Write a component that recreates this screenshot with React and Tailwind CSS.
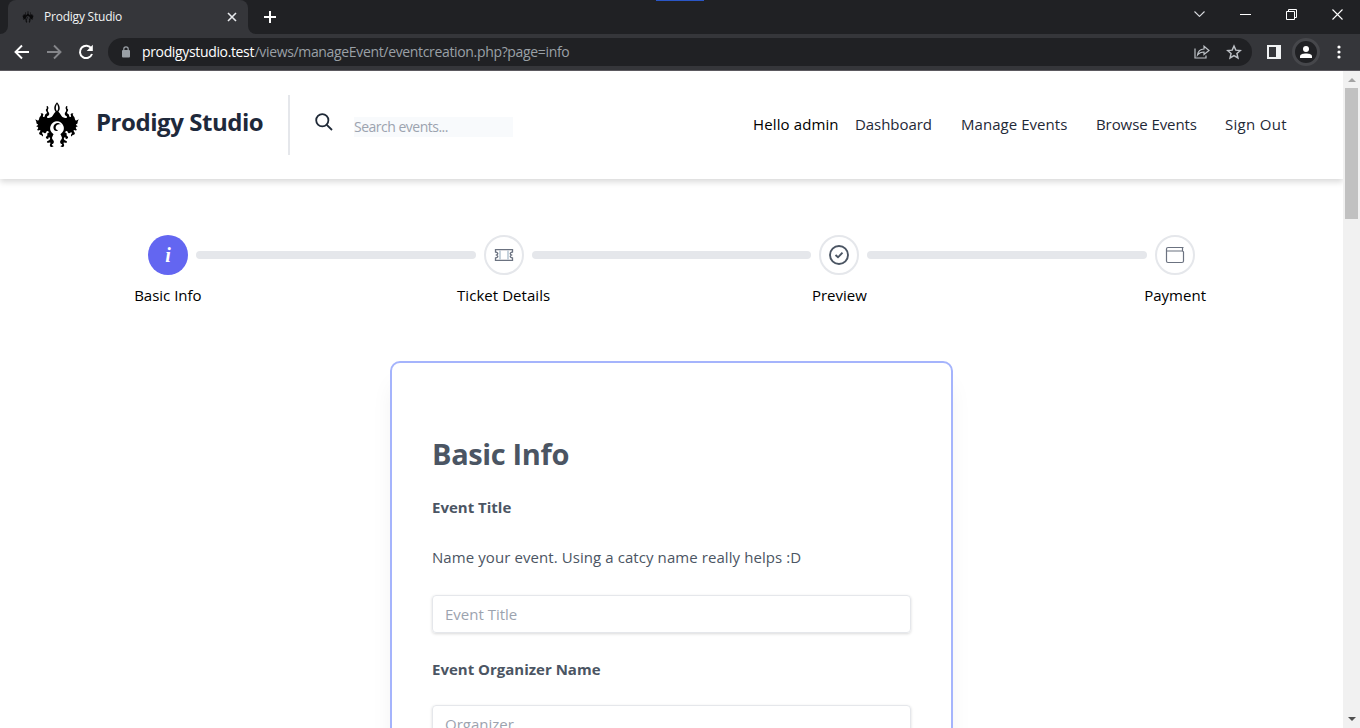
import React from "react";

function LogoHalf() {
  return (
    <g>
      <path d="M0 -74 C5 -69 9 -62 8 -55 C7.500 -49 4 -46 0 -43 L0 -48 C3 -51 4 -56 3 -61 C2 -65 1 -67 0 -69 Z" />
      <path d="M0 -49 C5 -46 8 -42 11 -37 C14 -32 17 -28 24 -28 C28 -27 31 -29 29 -33 C26 -34 22 -36 23 -41 C24 -46 28 -46 27 -51 C27 -54 24 -56 26 -60 C27 -63 30 -64 31 -61 C30 -58 29 -57 31 -55 C35 -52 32 -48 30 -45 C28 -42 33 -41 35 -38 C37 -35 34 -33 38 -31 C42 -29 43 -34 40 -37 C41 -42 46 -43 49 -40 C46 -39 46 -36 49 -33 C53 -30 52 -26 54 -22 C57 -19 60 -21 64 -24 C63 -19 60 -17 61 -13 C61 -10 56 -10 56 -8 C57 -5 61 -5 62 -3 C58 -2 54 -1 56 3 C58 6 61 7 56 9 C52 8 49 6 49 10 C50 14 55 16 52 20 C49 23 45 21 43 27 C40 25 41 21 44 18 C44 14 41 13 39 16 C36 19 32 16 31 12 C27 9 25 12 23 16 C20 20 16 18 13 23 L10 20 C20 13 22 4 19 -4 C16 -13 8 -18 0 -18 Z" />
      <path d="M11 21 C16 18 20 14 26 16 C31 18 27 22 29 25 C33 28 35 31 30 34 C26 35 24 32 25 29 C20 28 19 33 22 37 C25 40 32 40 29 45 C26 47 22 43 20 45 C18 49 22 50 21 54 C20 59 14 59 10 56 C12 53 16 54 15 50 C10 48 7 43 11 38 C15 34 16 30 13 26 Z" />
    </g>
  );
}

function Logo({ className }) {
  return (
    <svg viewBox="-65 -75 130 136" className={className} fill="currentColor">
      <LogoHalf />
      <g transform="scale(-1,1)"><LogoHalf /></g>
      <path d="M11 -8 C3 -11 -4 -6 -4 1 C-4 6 0 9 4 7 C0 13 -8 11 -10 4 C-12 -4 -7 -12 1 -13 C6 -13 9 -11 11 -8 Z" />
    </svg>
  );
}

function TabStrip() {
  return (
    <div className="flex h-[34px] bg-[#202124]">
      <div className="flex h-full w-2 items-end bg-[#35363a]">
        <div className="h-full w-full rounded-br-lg bg-[#202124]" />
      </div>
      <div className="flex h-full w-60 items-center rounded-t-lg bg-[#35363a] pl-[14px] pr-[11px]">
        <Logo className="h-3 w-3 text-black opacity-80" />
        <span className="ml-[10px] w-[160px] whitespace-nowrap text-[12px] leading-4 tracking-[-0.220px] text-[#f1f3f4]">Prodigy Studio</span>
        <svg viewBox="0 0 10 10" className="ml-auto h-[10px] w-[10px]" stroke="#e8eaed" strokeWidth="1.6"><path d="M1 1L9 9M9 1L1 9" /></svg>
      </div>
      <div className="flex h-full w-2 items-end bg-[#35363a]">
        <div className="h-full w-full rounded-bl-lg bg-[#202124]" />
      </div>
      <svg viewBox="0 0 12 12" className="ml-2 mt-[11px] h-3 w-3" stroke="#fff" strokeWidth="2"><path d="M6 0V12M0 6H12" /></svg>
      <div className="ml-[380px] h-px w-12 bg-[#2a56c6]" />
      <div className="ml-auto mr-[17.500px] mt-[9px] flex h-[10px] items-center gap-[35px]">
        <svg viewBox="0 0 11 6" className="h-[6px] w-[11px]" fill="none" stroke="#dadce0" strokeWidth="1.1"><path d="M.5 .5L5.5 5.4L10.5 .5" /></svg>
        <div className="h-px w-[11px] bg-white" />
        <svg viewBox="0 0 11 11" className="h-[11px] w-[11px]" fill="none" stroke="#fff" strokeWidth="1"><path d="M.5 2.5h8v8h-8zM2.5 2.5v-2h8v8h-2" /></svg>
        <svg viewBox="0 0 11 11" className="h-[11px] w-[11px]" stroke="#fff" strokeWidth="1.1"><path d="M.5 .5L10.5 10.5M10.5 .5L.5 10.5" /></svg>
      </div>
    </div>
  );
}

function Toolbar() {
  return (
    <div className="flex h-[37px] items-center border-b border-[#5b595f] bg-[#35363a] pl-[14px]">
      <svg viewBox="0 0 16 16" className="h-4 w-4" fill="none" stroke="#fff" strokeWidth="1.9"><path d="M15 8H2M8 1.5L1.5 8L8 14.5" /></svg>
      <svg viewBox="0 0 16 16" className="ml-4 h-4 w-4" fill="none" stroke="#85868a" strokeWidth="1.9"><path d="M1 8H14M8 1.5L14.500 8L8 14.500" /></svg>
      <svg viewBox="0 0 16 16" className="ml-4 h-4 w-4" fill="none" stroke="#fff" strokeWidth="2"><path d="M13.400 4.500A6.200 6.200 0 1 0 14 10" /><path d="M14.800 .8V7H8.700Z" fill="#fff" stroke="none" /></svg>
      <div className="ml-[14px] flex h-7 w-[1144px] items-center rounded-full bg-[#202124] pl-[14px] pr-[10px]">
        <svg viewBox="0 0 8 12" className="h-3 w-2" fill="#9aa0a6"><rect x="0" y="4" width="8" height="7.500" rx="1" /><path d="M1.800 5V3a2.200 2.200 0 0 1 4.400 0v2" fill="none" stroke="#9aa0a6" strokeWidth="1.200" /></svg>
        <span className="ml-3 flex whitespace-nowrap text-[14px] leading-5">
          <span className="w-[112.500px] tracking-[-0.350px] text-white">prodigystudio.test</span>
          <span className="tracking-[-0.340px] text-[#9aa0a6]">/views/manageEvent/eventcreation.php?page=info</span>
        </span>
        <svg viewBox="0 0 16 14" className="ml-auto h-[14px] w-4" fill="none" stroke="#bdc1c6" strokeWidth="1.200"><path d="M1 3.500V13H12V10.500" /><path d="M3.500 10C4 6 6.500 4.200 10 4V1.200L15 5.500L10 9.500V7C7 7 5 8 3.500 10Z" /></svg>
        <svg viewBox="0 0 24 24" className="ml-4 h-4 w-4" fill="none" stroke="#bdc1c6" strokeWidth="2.200"><path d="M12 3l2.700 6.200 6.800.6-5.100 4.500 1.500 6.600L12 17.400l-5.900 3.500 1.500-6.600-5.100-4.500 6.800-.6z" /></svg>
      </div>
      <div className="ml-[15px] h-[14px] w-[14px] border-2 border-r-[5px] border-[#f1f3f4]" />
      <div className="ml-[11px] flex h-7 w-7 items-center justify-center rounded-full border-[3px] border-[#46474b] bg-[#202124]">
        <svg viewBox="0 0 12 12" className="h-3 w-3" fill="#fff"><circle cx="6" cy="3" r="3" /><path d="M0 12V10.500C0 8.300 3 7.500 6 7.500S12 8.300 12 10.500V12Z" /></svg>
      </div>
      <svg viewBox="0 0 4 14" className="ml-[16.500px] h-[14px] w-1" fill="#fff"><circle cx="2" cy="2" r="1.600" /><circle cx="2" cy="7" r="1.600" /><circle cx="2" cy="12" r="1.600" /></svg>
    </div>
  );
}

function Header() {
  return (
    <header className="flex h-[108px] shrink-0 items-start pl-[35px] shadow-[0_3px_6px_rgba(0,0,0,0.150)]">
      <Logo className="mt-[31px] h-[46px] w-[44px] text-black" />
      <span className="ml-[17px] mt-[31px] w-[170px] whitespace-nowrap text-[24px] font-bold leading-10 tracking-[-0.450px] text-[#1e293b]">Prodigy Studio</span>
      <div className="ml-[22px] mt-6 h-[60px] w-[2px] bg-[#e5e7eb]" />
      <svg viewBox="0 0 18 18" className="ml-[25px] mt-[42px] h-[18px] w-[18px]" fill="none" stroke="#1f2937" strokeWidth="1.800"><circle cx="7.300" cy="7.300" r="6.100" /><path d="M11.800 11.800L17 17" /></svg>
      <div className="ml-[21px] mt-[46px] flex h-5 w-[159px] items-center whitespace-nowrap bg-[#f8fafc] text-[14px] leading-5 tracking-[-0.500px] text-[#9ca3af]">Search events...</div>
      <nav className="ml-auto mr-[55px] mt-[41px] flex whitespace-nowrap text-[15px] leading-6 text-[#1f2937]">
        <span className="w-[102px] tracking-[0.120px] text-black">Hello admin</span>
        <span className="w-[106px] tracking-[-0.050px]">Dashboard</span>
        <span className="w-[135px] tracking-[0.050px]">Manage Events</span>
        <span className="w-[129px] tracking-[-0.080px]">Browse Events</span>
        <span className="w-[63px] tracking-[0.300px]">Sign Out</span>
      </nav>
    </header>
  );
}

function Bar() {
  return <div className="mx-2 h-2 flex-1 rounded-full bg-[#e5e7eb]" />;
}

function Circle({ children }) {
  return <div className="flex h-10 w-10 items-center justify-center rounded-full border-2 border-[#e5e7eb]">{children}</div>;
}

function Steps() {
  return (
    <section className="mt-14">
      <div className="mx-[148px] flex items-center">
        <div className="flex h-10 w-10 items-center justify-center rounded-full bg-[#6366f1] font-['Liberation_Serif',serif] text-[20px] font-bold italic text-white">i</div>
        <Bar />
        <Circle>
          <svg viewBox="0 0 20 14" className="h-[14px] w-5" fill="none" stroke="#6b7280" strokeWidth="1.300"><path d="M1.500 1.600H18.500V4C16 4.500 15.500 6 17.500 7C15.500 8 16 9.500 18.500 10V12.400H1.500V10C4 9.500 4.500 8 2.500 7C4.500 6 4 4.500 1.500 4Z" /><path d="M6 2.500V11.500M14 2.500V11.500" stroke="#a9bccb" /></svg>
        </Circle>
        <Bar />
        <Circle>
          <svg viewBox="0 0 20 20" className="h-5 w-5" fill="none" stroke="#4b5563" strokeWidth="1.900"><circle cx="10" cy="10" r="9" /><path d="M6.500 10L9 12.300L13.500 7.700" /></svg>
        </Circle>
        <Bar />
        <Circle>
          <svg viewBox="0 0 20 18" className="h-[18px] w-5" fill="none" stroke="#6b7280" strokeWidth="1.200"><path d="M18.500 1.500H3Q1.500 1.500 1.500 3V15Q1.500 16.500 3 16.500H17Q18.500 16.500 18.500 15V6Q18.500 5 17 5H2M17.500 1.500V5" /></svg>
        </Circle>
      </div>
      <div className="mt-2 grid grid-cols-4 whitespace-nowrap text-center text-[15px] leading-6 text-black">
        <span>Basic Info</span>
        <span className="tracking-[0.050px]">Ticket Details</span>
        <span>Preview</span>
        <span>Payment</span>
      </div>
    </section>
  );
}

function Field({ placeholder }) {
  return (
    <div className="flex h-[38px] items-center rounded-[4px] border border-[#e5e7eb] px-3 text-[15px] leading-6 text-[#9ca3af] shadow-[0_1px_3px_rgba(0,0,0,0.150)]">{placeholder}</div>
  );
}

function FormCard() {
  return (
    <section className="ml-[390px] mt-[54px] h-[600px] w-[563px] rounded-[10px] border-2 border-[#a5b4fc] px-10 pt-[71px] text-[#4b5563] shadow-[0_20px_25px_-5px_rgba(0,0,0,0.080)]">
      <h1 className="h-10 whitespace-nowrap text-[29px] font-bold leading-10 tracking-[-0.350px]">Basic Info</h1>
      <h2 className="mt-[21px] whitespace-nowrap text-[15px] font-bold leading-6">Event Title</h2>
      <p className="mt-[26px] whitespace-nowrap text-[15px] leading-6 tracking-[0.080px]">Name your event. Using a catcy name really helps :D</p>
      <div className="mt-[26px]"><Field placeholder="Event Title" /></div>
      <h2 className="mt-6 whitespace-nowrap text-[15px] font-bold leading-6">Event Organizer Name</h2>
      <div className="mt-6"><Field placeholder="Organizer" /></div>
    </section>
  );
}

function Scrollbar() {
  return (
    <div className="flex w-[17px] shrink-0 flex-col items-center bg-[#f1f1f1]">
      <svg viewBox="0 0 8 4" className="mt-[7px] h-1 w-2" fill="#a3a3a3"><path d="M0 4L4 0L8 4Z" /></svg>
      <div className="mt-[6px] h-[131px] w-[13px] bg-[#c1c1c1]" />
      <svg viewBox="0 0 8 4" className="mb-[7px] mt-auto h-1 w-2" fill="#505050"><path d="M0 0L4 4L8 0Z" /></svg>
    </div>
  );
}

export default function App() {
  return (
    <div className="flex h-screen w-full flex-col overflow-hidden bg-white font-['Open_Sans','Noto_Sans',sans-serif]">
      <TabStrip />
      <Toolbar />
      <div className="flex min-h-0 flex-1">
        <main className="min-w-0 flex-1 overflow-hidden">
          <Header />
          <Steps />
          <FormCard />
        </main>
        <Scrollbar />
      </div>
    </div>
  );
}
